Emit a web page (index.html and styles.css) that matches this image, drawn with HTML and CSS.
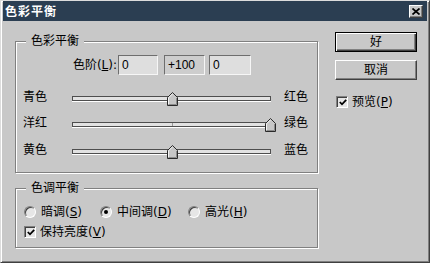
FILE: index.html
```html
<!DOCTYPE html>
<html>
<head>
<meta charset="utf-8">
<link rel="stylesheet" href="styles.css">
</head>
<body>
<div class="window">
  <div class="titlebar">
    <span class="title">色彩平衡</span>
    <span class="close"><svg width="8" height="7" viewBox="0 0 8 7"><path d="M0.5 0.5 L7.5 6.5 M7.5 0.5 L0.5 6.5" stroke="#000" stroke-width="1.7" fill="none"/></svg></span>
  </div>
  <div class="main">
    <div class="left">
      <div class="group g1">
        <span class="legend">色彩平衡</span>
        <div class="levels">
          <span class="levels-label">色阶(<u>L</u>):</span>
          <span class="field f1">0</span>
          <span class="field f2">+100</span>
          <span class="field f3">0</span>
        </div>
        <div class="sliders">
          <div class="srow">
            <span class="slabel">青色</span>
            <div class="track"><span class="tick"></span><span class="thumb" style="left: calc(50% - 5px)"><svg width="11" height="14" viewBox="0 0 11 14"><polygon points="5.5,0.5 10.5,5.5 10.5,13.5 0.5,13.5 0.5,5.5" fill="#c6c6c6" stroke="#2a2a2a" stroke-width="1"/><polyline points="1.5,12.5 1.5,5.9 5.5,1.9" fill="none" stroke="#f4f4f4" stroke-width="1"/><polyline points="1.5,12.5 9.5,12.5 9.5,6" fill="none" stroke="#8a8a8a" stroke-width="1"/></svg></span></div>
            <span class="rlabel">红色</span>
          </div>
          <div class="srow">
            <span class="slabel">洋红</span>
            <div class="track"><span class="tick"></span><span class="thumb" style="left: calc(100% - 5px)"><svg width="11" height="14" viewBox="0 0 11 14"><polygon points="5.5,0.5 10.5,5.5 10.5,13.5 0.5,13.5 0.5,5.5" fill="#c6c6c6" stroke="#2a2a2a" stroke-width="1"/><polyline points="1.5,12.5 1.5,5.9 5.5,1.9" fill="none" stroke="#f4f4f4" stroke-width="1"/><polyline points="1.5,12.5 9.5,12.5 9.5,6" fill="none" stroke="#8a8a8a" stroke-width="1"/></svg></span></div>
            <span class="rlabel">绿色</span>
          </div>
          <div class="srow last">
            <span class="slabel">黄色</span>
            <div class="track"><span class="tick"></span><span class="thumb" style="left: calc(50% - 5px)"><svg width="11" height="14" viewBox="0 0 11 14"><polygon points="5.5,0.5 10.5,5.5 10.5,13.5 0.5,13.5 0.5,5.5" fill="#c6c6c6" stroke="#2a2a2a" stroke-width="1"/><polyline points="1.5,12.5 1.5,5.9 5.5,1.9" fill="none" stroke="#f4f4f4" stroke-width="1"/><polyline points="1.5,12.5 9.5,12.5 9.5,6" fill="none" stroke="#8a8a8a" stroke-width="1"/></svg></span></div>
            <span class="rlabel">蓝色</span>
          </div>
        </div>
      </div>
      <div class="group g2">
        <span class="legend">色调平衡</span>
        <div class="radios">
          <span class="ritem"><span class="radio"></span>暗调(<u>S</u>)</span>
          <span class="ritem"><span class="radio on"></span>中间调(<u>D</u>)</span>
          <span class="ritem"><span class="radio"></span>高光(<u>H</u>)</span>
        </div>
        <div class="check keep">
          <span class="cbox"><svg width="8" height="7" viewBox="0 0 8 7"><polyline points="0.8,3 3,5.3 7.2,0.9" fill="none" stroke="#000" stroke-width="1.8"/></svg></span>保持亮度(<u>V</u>)
        </div>
      </div>
    </div>
    <div class="right">
      <div class="btn default">好</div>
      <div class="btn cancel">取消</div>
      <div class="check preview">
        <span class="cbox"><svg width="8" height="7" viewBox="0 0 8 7"><polyline points="0.8,3 3,5.3 7.2,0.9" fill="none" stroke="#000" stroke-width="1.8"/></svg></span>预览(<u>P</u>)
      </div>
    </div>
  </div>
</div>
</body>
</html>
```

FILE: styles.css
```css
* { box-sizing: border-box; }

body {
  margin: 0;
  background: #c8c8c8;
  font: 12px/14px "DejaVu Sans", "Noto Sans CJK SC", sans-serif;
  color: #000;
}

.window {
  width: 430px;
  height: 263px;
  background: #c8c8c8;
  border: 1px solid;
  border-color: #dcdcdc #404040 #404040 #dcdcdc;
  box-shadow: inset 1px 1px #ffffff, inset -1px -1px #808080;
  padding: 0 2px;
}

.titlebar {
  height: 20px;
  background: #2b3e52;
  display: flex;
  align-items: center;
  justify-content: space-between;
  padding: 0 4px 0 2px;
}

.title {
  color: #ffffff;
  font-weight: bold;
  font-size: 12px;
  letter-spacing: 1px;
  font-family: "Noto Sans CJK SC", sans-serif;
}

.close {
  width: 14px;
  height: 13px;
  background: #c8c8c8;
  border: 1px solid;
  border-color: #ffffff #404040 #404040 #ffffff;
  box-shadow: inset -1px -1px #808080;
  display: flex;
  align-items: center;
  justify-content: center;
}

.close svg { display: block; }

.main {
  display: flex;
  align-items: flex-start;
  padding-left: 12px;
}

.left {
  width: 303px;
  margin-top: 20px;
}

.right {
  width: 82px;
  margin-left: 17px;
  padding-top: 11px;
}

.group {
  position: relative;
  border: 1px solid #808080;
  box-shadow: 1px 1px #ffffff, inset 1px 1px #ffffff;
}

.g1 { height: 132px; }
.g2 { height: 60px; margin-top: 15px; }

.legend {
  position: absolute;
  top: -8px;
  left: 10px;
  padding: 0 5px;
  background: #c8c8c8;
  line-height: 14px;
}

.levels {
  display: flex;
  align-items: center;
  height: 20px;
  margin-top: 13px;
}

.levels-label {
  width: 101px;
  margin-right: 1px;
  text-align: right;
}

.field {
  height: 20px;
  line-height: 18px;
  padding-left: 3px;
  font-family: "Liberation Sans", sans-serif;
  border: 1px solid;
  border-color: #6e6e6e #f6f6f6 #f6f6f6 #6e6e6e;
  background: #dedede;
}

.f1 { width: 40px; margin-right: 6px; }
.f2 { width: 41px; margin-right: 4px; background: #cdcdcd; }
.f3 { width: 42px; }

.sliders { margin-top: 9px; }

.srow {
  display: flex;
  align-items: center;
  height: 26px;
}

.srow.last { margin-top: 1px; }

.slabel {
  width: 56px;
  padding-left: 7px;
}

.track {
  position: relative;
  width: 199px;
  height: 5px;
  margin-top: 2px;
  border: 1px solid #4e4e4e;
  background: #e2e2e2;
  box-shadow: 0 1px #ffffff;
}

.tick {
  position: absolute;
  left: 50%;
  top: 0;
  width: 1px;
  height: 3px;
  background: #9a9a9a;
}

.thumb {
  position: absolute;
  top: -5px;
  width: 11px;
  height: 14px;
}

.thumb svg { display: block; }

.rlabel { margin-left: 13px; }

.radios {
  display: flex;
  align-items: center;
  height: 14px;
  margin-top: 16px;
  padding-left: 8px;
}

.ritem {
  display: flex;
  align-items: center;
}

.ritem:nth-child(1) { width: 76px; }
.ritem:nth-child(2) { width: 88px; }

.radio {
  position: relative;
  width: 12px;
  height: 12px;
  margin-right: 5px;
  border-radius: 50%;
  border: 1px solid;
  border-color: #808080 #ffffff #ffffff #808080;
  box-shadow: inset 1px 1px #404040;
  background: #e6e6e6;
}

.radio.on::after {
  content: "";
  position: absolute;
  left: 3px;
  top: 3px;
  width: 4px;
  height: 4px;
  border-radius: 50%;
  background: #000;
}

.check {
  display: flex;
  align-items: center;
  height: 14px;
}

.keep {
  margin-top: 6px;
  padding-left: 8px;
}

.preview {
  margin-top: 15px;
  padding-left: 1px;
}

.cbox {
  width: 12px;
  height: 12px;
  margin-right: 4px;
  border: 1px solid;
  border-color: #808080 #ffffff #ffffff #808080;
  box-shadow: inset 1px 1px #404040;
  background: #e6e6e6;
  display: flex;
  align-items: center;
  justify-content: center;
  padding: 1px 0 0 1px;
}

.cbox svg { display: block; }

.btn {
  height: 20px;
  display: flex;
  align-items: center;
  justify-content: center;
  background: #c8c8c8;
  border: 1px solid;
  border-color: #ffffff #404040 #404040 #ffffff;
  box-shadow: inset -1px -1px #808080;
}

.btn.default {
  border-color: #000000;
  box-shadow: inset 1px 1px #ffffff, inset -1px -1px #404040, inset -2px -2px #808080;
}

.btn.cancel { margin-top: 8px; }
```
